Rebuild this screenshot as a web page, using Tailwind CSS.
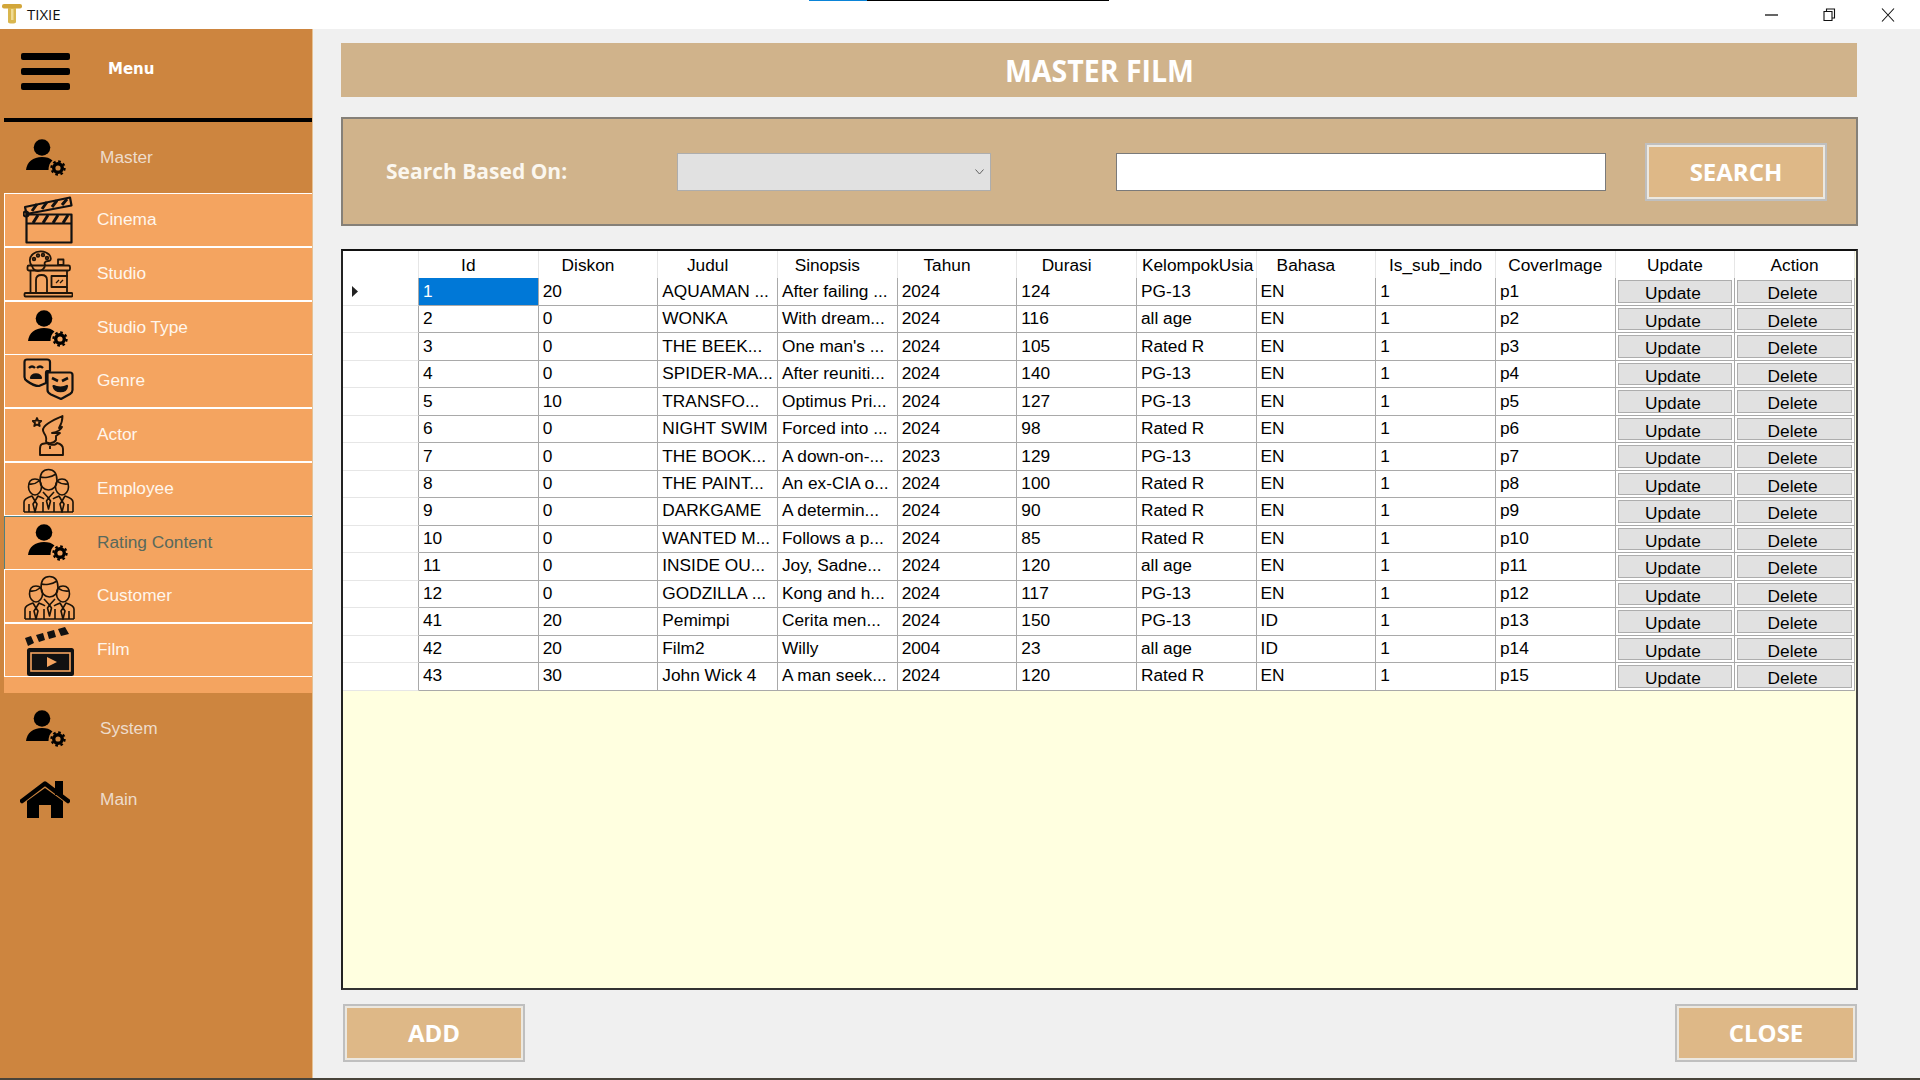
<!DOCTYPE html>
<html>
<head>
<meta charset="utf-8">
<title>TIXIE</title>
<script src="https://cdn.jsdelivr.net/npm/@tailwindcss/browser@4"></script>
</head>
<body class="m-0 w-[1920px] h-[1080px] overflow-hidden bg-[#f0f0f0] font-['Liberation_Sans',sans-serif]">
<svg class="absolute w-0 h-0">
  <defs>
    <symbol id="usergear" viewBox="0 0 40 37">
      <circle cx="16" cy="8.5" r="8.3" fill="#000"/>
      <path d="M0 31C1 23 7 18 16 18C20.5 18 24 19 26.5 21.5C24 23.5 22.5 26.5 22.5 31Z" fill="#000"/>
      <circle cx="32" cy="29" r="4.3" fill="none" stroke="#000" stroke-width="3.4"/>
      <circle cx="32" cy="29" r="6.6" fill="none" stroke="#000" stroke-width="2.2" stroke-dasharray="2.6 2.58"/>
    </symbol>
    <symbol id="people" viewBox="0 0 51 45">
      <g fill="none" stroke="#1a1208" stroke-width="1.6" stroke-linejoin="round">
        <path d="M17 13C17 6 20 1.500 25.500 1.500C31 1.500 34 6 34 13C34 18 30 22 25.500 22C21 22 17 18 17 13Z"/>
        <path d="M17.500 9C21 10 28 9.500 33 6"/>
        <path d="M5.500 19C5.500 13.500 8 11 12 11C16 11 18.500 14 18.500 19C18.500 23 15.500 27 12 27C8.500 27 5.500 23 5.500 19Z"/>
        <path d="M6 16C9 16.500 13 15.500 16 13"/>
        <path d="M32.500 19C32.500 14 35 11 39 11C43 11 45.500 13.500 45.500 19C45.500 23 42.500 27 39 27C35.500 27 32.500 23 32.500 19Z"/>
        <path d="M34 13C37 15.500 41 16.500 45 16"/>
        <path d="M1 44V34C1 31 6 29 9 28L12 33L15 28C17 29 20 30 21 31"/>
        <path d="M50 44V34C50 31 45 29 42 28L39 33L36 28C34 29 31 30 30 31"/>
        <path d="M20 24L25.500 30L31 24"/>
        <path d="M1 44H50"/>
        <path d="M12 33L10 36L12 44L14 36Z"/>
        <path d="M39 33L37 36L39 44L41 36Z"/>
        <path d="M25.500 30L23.500 33L25.500 41L27.500 33Z"/>
        <path d="M6 36V44M45 36V44M20 34V44M31 34V44"/>
      </g>
    </symbol>
  </defs>
</svg>

<div class="relative flex flex-col h-[1080px]">
  <div class="absolute top-0 left-[809px] w-[58px] h-px bg-[#0a84d8]"></div>
  <div class="absolute top-0 left-[867px] w-[242px] h-px bg-black"></div>

  <!-- title bar -->
  <header class="h-[29px] shrink-0 bg-white flex items-center">
    <svg class="ml-[2px] w-[20px] h-[20px] mb-px" viewBox="0 0 20 20">
      <rect x="0" y="0" width="20" height="4.500" rx="2" fill="#d2a63a"/>
      <path d="M6 4H14V18C14 20 6 20 6 18Z" fill="#d9b64e"/>
      <path d="M9 5H11.500V16H9Z" fill="#f0dc95"/>
    </svg>
    <span class="ml-[5px] text-[15px] text-[#111] font-['Open_Sans',sans-serif]">TIXIE</span>
    <div class="ml-auto flex items-center gap-[45px] mr-[25px]">
      <svg class="w-[13px] h-[13px]" viewBox="0 0 13 13"><path d="M0 7H13" stroke="#111" stroke-width="1.300"/></svg>
      <svg class="w-[13px] h-[13px]" viewBox="0 0 13 13"><path d="M1 3.500H9V12.500H1ZM3.500 3.500V1H11.500V10H9" fill="none" stroke="#111" stroke-width="1.100"/></svg>
      <svg class="w-[14px] h-[14px]" viewBox="0 0 14 14"><path d="M1 0.500L13 13.500M13 0.500L1 13.500" stroke="#111" stroke-width="1.100"/></svg>
    </div>
  </header>

  <div class="flex flex-1 min-h-0">
    <!-- sidebar -->
    <aside class="w-[313px] shrink-0 bg-[#cd853f] border-r border-[#e6c193] flex flex-col">
      <div class="h-[93px] ml-[4px] mr-0 border-b-4 border-black flex items-center relative shrink-0">
        <div class="ml-[17px] mb-[4px] w-[49px] flex flex-col gap-[8px]">
          <div class="h-[7px] rounded-[2px] bg-black"></div>
          <div class="h-[7px] rounded-[2px] bg-black"></div>
          <div class="h-[7px] rounded-[2px] bg-black"></div>
        </div>
        <span class="ml-[38px] mb-[9px] text-[15px] font-bold text-white font-['DejaVu_Sans',sans-serif]">Menu</span>
      </div>
      <div class="h-[71px] shrink-0 flex items-center text-[17.3px] text-[#eedccb]">
        <svg class="ml-[26px] w-[40px] h-[37px]"><use href="#usergear"/></svg>
        <span class="ml-[34px]">Master</span>
      </div>

      <div class="ml-[4px] h-[500px] shrink-0 bg-[#f4a460] text-[17.3px] text-[#fff6ec]">
        <div class="h-[54px] border border-r-0 border-white flex items-center relative">
          <svg class="absolute left-[18px] top-[2px] w-[50px] h-[48px]" viewBox="0 0 50 48" fill="none" stroke="#111" stroke-width="2.200" stroke-linejoin="round">
            <rect x="3.500" y="18.500" width="45" height="28"/>
            <path d="M3.500 27.500H48.500"/>
            <path d="M10 27L15 19M20 27L25 19M30 27L35 19M40 27L45 19" stroke-width="3"/>
            <path d="M2 11L47 1.500L48.500 9.500L3.500 18Z"/>
            <circle cx="3" cy="18" r="2.500"/>
            <path d="M9 15L14 8M19 13L24 6M29 11L34 4.500M39 9L44 3" stroke-width="3"/>
          </svg>
          <span class="ml-[92px]">Cinema</span>
        </div>
        <div class="h-[54px] border border-r-0 border-white flex items-center relative -mt-[0.25px]">
          <svg class="absolute left-[18px] top-[2px] w-[50px] h-[48px]" viewBox="0 0 50 48" fill="none" stroke="#201408" stroke-width="1.800" stroke-linejoin="round">
            <path d="M9 16C6 13 6 7 10 4C14 0.500 22 0.500 26 4.500C29 8 28 11 25 11C22 11 21 13 22 15C22 18 19 21 15 21C12 21 10 19 9 16Z"/>
            <circle cx="11" cy="9" r="1.300"/><circle cx="15" cy="5.500" r="1.300"/><circle cx="20" cy="5" r="1.300"/><circle cx="24" cy="8" r="1.300"/>
            <rect x="35" y="9.500" width="5.500" height="5.500"/>
            <rect x="4.500" y="15.500" width="42.500" height="5" rx="1.500"/>
            <path d="M7.500 20.500V43M44 20.500V27M44 37V43"/>
            <path d="M13 43V30C13 26 15 25 18.500 25C22 25 24 26 24 30V43"/>
            <rect x="28.500" y="26" width="15.500" height="11"/>
            <path d="M33 33L36 30M37 33L40 30" stroke-width="1.300"/>
            <rect x="1.500" y="43" width="48" height="3.500" rx="1"/>
          </svg>
          <span class="ml-[92px]">Studio</span>
        </div>
        <div class="h-[54px] border border-r-0 border-white flex items-center relative -mt-[0.25px]">
          <svg class="absolute left-[23px] top-[8px] w-[40px] h-[37px]"><use href="#usergear"/></svg>
          <span class="ml-[92px]">Studio Type</span>
        </div>
        <div class="h-[54px] border border-r-0 border-white flex items-center relative -mt-[0.25px]">
          <svg class="absolute left-[18px] top-[3px] w-[51px] h-[42px]" viewBox="0 0 51 42" fill="none" stroke="#111" stroke-width="2.200" stroke-linejoin="round">
            <path d="M1.500 4C1.500 2 2.500 1.500 4 1.500H24C26 1.500 27 2.500 27 4V13H24C23 13 23 14 23 15V25L16 28C13 28 8 26 4 23C2.500 22 1.500 21 1.500 19Z"/>
            <path d="M8 10C10 8 12 8 14 10M16 10C18 8 20 8 22 10" stroke-width="2.400" transform="translate(-2 0)"/>
            <path d="M8 20C9 15 17 15 18 20Z" fill="#111"/>
            <path d="M24.500 14.500H47C48.500 14.500 49.500 15.500 49.500 17V32C49.500 33.500 48.500 35 47 36L38 41L28 36.500C26 35.500 24.500 34 24.500 32Z"/>
            <path d="M29 20L35 23M45 20L39 23" stroke-width="2.600"/>
            <path d="M30.500 28C34 30 41 30 44 28C43 35 32 35 30.500 28Z" fill="#111"/>
          </svg>
          <span class="ml-[92px]">Genre</span>
        </div>
        <div class="h-[54px] border border-r-0 border-white flex items-center relative -mt-[0.25px]">
          <svg class="absolute left-[27px] top-[6px] w-[32px] h-[41px]" viewBox="0 0 32 41" fill="none" stroke="#201408" stroke-width="1.900" stroke-linejoin="round">
            <path d="M5 3L6.200 5.800L9.200 6L7 8L7.700 11L5 9.500L2.300 11L3 8L0.800 6L3.800 5.800Z"/>
            <path d="M30.500 1C27 3 20 5 14 10C11.500 12 10 15 12 18C14 21 15 23 14 26C14 29 22 29 24 25V21L28 18H20C25 17 29 15 30 12L27 13C29.500 9 30.500 5 30.500 1Z"/>
            <path d="M10 29C8 30 8 32 8 34V40H31V34C31 31 29 29 25 28C24 30 17 31 15 28Z"/>
            <path d="M18 31V34"/>
          </svg>
          <span class="ml-[92px]">Actor</span>
        </div>
        <div class="h-[54px] border border-r-0 border-white flex items-center relative -mt-[0.25px]">
          <svg class="absolute left-[18px] top-[5px] w-[51px] h-[45px]"><use href="#people"/></svg>
          <span class="ml-[92px]">Employee</span>
        </div>
        <div class="h-[54px] border border-r-0 border-[#4f7f80] flex items-center relative -mt-[0.25px] text-[#59695c]">
          <svg class="absolute left-[23px] top-[7px] w-[40px] h-[37px]"><use href="#usergear"/></svg>
          <span class="ml-[92px]">Rating Content</span>
        </div>
        <div class="h-[54px] border border-r-0 border-white flex items-center relative -mt-[0.25px]">
          <svg class="absolute left-[19px] top-[5px] w-[51px] h-[45px]"><use href="#people"/></svg>
          <span class="ml-[92px]">Customer</span>
        </div>
        <div class="h-[54px] border border-r-0 border-white flex items-center relative -mt-[0.25px]">
          <svg class="absolute left-[19px] top-[3px] w-[51px] h-[49px]" viewBox="0 0 51 49">
            <path d="M1 11L7 9L10 16L4 19ZM12 8L19 6L21 13L15 15ZM23 5L30 3L32 10L25 12ZM34 2L41 0L45 7L37 9Z" fill="#111"/>
            <rect x="3" y="21" width="47" height="28" rx="2.500" fill="#111"/>
            <rect x="7" y="26" width="39" height="18" fill="#111" stroke="#f4a460" stroke-width="1.600"/>
            <path d="M23 30V40L33 35Z" fill="#f4a460"/>
          </svg>
          <span class="ml-[92px]">Film</span>
        </div>
      </div>

      <div class="h-[71px] shrink-0 flex items-center text-[17.3px] text-[#eedccb]">
        <svg class="ml-[26px] w-[40px] h-[37px]"><use href="#usergear"/></svg>
        <span class="ml-[34px]">System</span>
      </div>
      <div class="h-[71px] shrink-0 flex items-center text-[17.3px] text-[#eedccb]">
        <svg class="ml-[20px] w-[50px] h-[38px]" viewBox="0 0 50 38">
          <path d="M35 0H43V14H35Z" fill="#000"/>
          <path d="M2 20L25 2.500L48 20" fill="none" stroke="#000" stroke-width="4.500" stroke-linecap="round" stroke-linejoin="round"/>
          <path d="M7 20L25 7L43 20V37H31V24H19V37H7Z" fill="#000"/>
        </svg>
        <span class="ml-[30px]">Main</span>
      </div>
    </aside>

    <!-- content -->
    <main class="w-[1602px] shrink-0 pl-[28px] pt-[14px] flex flex-col">
      <div class="w-[1516px] h-[54px] bg-[#d0b38b] flex items-center justify-center">
        <h1 class="text-[30px] font-bold text-white font-['Open_Sans',sans-serif] scale-x-[0.95]">MASTER FILM</h1>
      </div>

      <div class="mt-[20px] w-[1517px] h-[109px] bg-[#d0b38b] border-2 border-t-2 border-[#858078] flex items-center relative">
        <span class="ml-[43px] w-[291px] text-[21px] font-bold text-[#fbf7ef] font-['Open_Sans',sans-serif]">Search Based On:</span>
        <div class="w-[314px] h-[38px] bg-[#e1e1e1] border border-[#adadad] flex items-center justify-end pr-[6px]">
          <svg class="w-[9px] h-[6px]" viewBox="0 0 9 6"><path d="M0.500 0.500L4.500 5L8.500 0.500" fill="none" stroke="#606060"/></svg>
        </div>
        <div class="ml-[125px] w-[490px] h-[38px] bg-white border border-[#7a7a7a]"></div>
        <button class="ml-[39px] w-[182px] h-[58px] bg-[#deb887] border-2 border-[#bfbfbf] shadow-[inset_0_0_0_2px_#ece8e0] text-[24px] font-bold text-white font-['Open_Sans',sans-serif]">SEARCH</button>
      </div>

      <div class="mt-[23px] w-[1517px] h-[741px] bg-[#ffffe0] border-2 border-r-[#444] border-b-[#333] border-t-[#111] border-l-[#222] text-[17.3px] text-black">
        <div class="grid grid-cols-[76px_repeat(12,119.67px)] auto-rows-[27.47px] [&>div]:bg-white [&>div]:border-r [&>div]:border-b [&>div]:border-[#a9a9a9] [&>div]:pl-[4px] [&>div]:flex [&>div]:items-center [&>div]:overflow-hidden [&>div]:whitespace-nowrap [&_button]:w-full [&_button]:h-full [&_button]:bg-[#e1e1e1] [&_button]:border [&_button]:border-[#adadad] [&_button]:pr-[4px]">
          <div class="h-[30px] border-r-[#e6e6e6]! border-b-[#a9a9a9]!"></div>
          <div class="h-[30px] border-r-[#e6e6e6]! justify-center pr-[24px]!">Id</div>
          <div class="h-[30px] border-r-[#e6e6e6]! justify-center pr-[24px]!">Diskon</div>
          <div class="h-[30px] border-r-[#e6e6e6]! justify-center pr-[24px]!">Judul</div>
          <div class="h-[30px] border-r-[#e6e6e6]! justify-center pr-[24px]!">Sinopsis</div>
          <div class="h-[30px] border-r-[#e6e6e6]! justify-center pr-[24px]!">Tahun</div>
          <div class="h-[30px] border-r-[#e6e6e6]! justify-center pr-[24px]!">Durasi</div>
          <div class="h-[30px] border-r-[#e6e6e6]! pl-[5px]!">KelompokUsia</div>
          <div class="h-[30px] border-r-[#e6e6e6]! justify-center pr-[24px]!">Bahasa</div>
          <div class="h-[30px] border-r-[#e6e6e6]! justify-center pl-0!">Is_sub_indo</div>
          <div class="h-[30px] border-r-[#e6e6e6]! justify-center pl-0!">CoverImage</div>
          <div class="h-[30px] border-r-[#e6e6e6]! justify-center pl-0!">Update</div>
          <div class="h-[30px] border-r-[#e6e6e6]! justify-center pl-0!">Action</div>
        </div>
        <div class="grid grid-cols-[76px_repeat(12,119.67px)] auto-rows-[27.47px] [&>div]:bg-white [&>div]:border-r [&>div]:border-b [&>div]:border-[#a9a9a9] [&>div]:pl-[4px] [&>div]:flex [&>div]:items-center [&>div]:overflow-hidden [&>div]:whitespace-nowrap [&_button]:w-full [&_button]:h-full [&_button]:bg-[#e1e1e1] [&_button]:border [&_button]:border-[#adadad] [&_button]:pr-[4px]">
          <div class="border-b-[#e6e6e6]! pl-[9px]!"><svg class="w-[6px] h-[11px]" viewBox="0 0 6 11"><path d="M0 0L6 5.500L0 11Z" fill="#222"/></svg></div>
          <div class="bg-[#0078d7]! text-white">1</div><div>20</div><div>AQUAMAN ...</div><div>After failing ...</div><div>2024</div><div>124</div><div>PG-13</div><div>EN</div><div>1</div><div>p1</div><div class="p-[2px]!"><button>Update</button></div><div class="p-[2px]!"><button>Delete</button></div>
          <div class="border-b-[#e6e6e6]!"></div>
          <div>2</div><div>0</div><div>WONKA</div><div>With dream...</div><div>2024</div><div>116</div><div>all age</div><div>EN</div><div>1</div><div>p2</div><div class="p-[2px]!"><button>Update</button></div><div class="p-[2px]!"><button>Delete</button></div>
          <div class="border-b-[#e6e6e6]!"></div>
          <div>3</div><div>0</div><div>THE BEEK...</div><div>One man's ...</div><div>2024</div><div>105</div><div>Rated R</div><div>EN</div><div>1</div><div>p3</div><div class="p-[2px]!"><button>Update</button></div><div class="p-[2px]!"><button>Delete</button></div>
          <div class="border-b-[#e6e6e6]!"></div>
          <div>4</div><div>0</div><div>SPIDER-MA...</div><div>After reuniti...</div><div>2024</div><div>140</div><div>PG-13</div><div>EN</div><div>1</div><div>p4</div><div class="p-[2px]!"><button>Update</button></div><div class="p-[2px]!"><button>Delete</button></div>
          <div class="border-b-[#e6e6e6]!"></div>
          <div>5</div><div>10</div><div>TRANSFO...</div><div>Optimus Pri...</div><div>2024</div><div>127</div><div>PG-13</div><div>EN</div><div>1</div><div>p5</div><div class="p-[2px]!"><button>Update</button></div><div class="p-[2px]!"><button>Delete</button></div>
          <div class="border-b-[#e6e6e6]!"></div>
          <div>6</div><div>0</div><div>NIGHT SWIM</div><div>Forced into ...</div><div>2024</div><div>98</div><div>Rated R</div><div>EN</div><div>1</div><div>p6</div><div class="p-[2px]!"><button>Update</button></div><div class="p-[2px]!"><button>Delete</button></div>
          <div class="border-b-[#e6e6e6]!"></div>
          <div>7</div><div>0</div><div>THE BOOK...</div><div>A down-on-...</div><div>2023</div><div>129</div><div>PG-13</div><div>EN</div><div>1</div><div>p7</div><div class="p-[2px]!"><button>Update</button></div><div class="p-[2px]!"><button>Delete</button></div>
          <div class="border-b-[#e6e6e6]!"></div>
          <div>8</div><div>0</div><div>THE PAINT...</div><div>An ex-CIA o...</div><div>2024</div><div>100</div><div>Rated R</div><div>EN</div><div>1</div><div>p8</div><div class="p-[2px]!"><button>Update</button></div><div class="p-[2px]!"><button>Delete</button></div>
          <div class="border-b-[#e6e6e6]!"></div>
          <div>9</div><div>0</div><div>DARKGAME</div><div>A determin...</div><div>2024</div><div>90</div><div>Rated R</div><div>EN</div><div>1</div><div>p9</div><div class="p-[2px]!"><button>Update</button></div><div class="p-[2px]!"><button>Delete</button></div>
          <div class="border-b-[#e6e6e6]!"></div>
          <div>10</div><div>0</div><div>WANTED M...</div><div>Follows a p...</div><div>2024</div><div>85</div><div>Rated R</div><div>EN</div><div>1</div><div>p10</div><div class="p-[2px]!"><button>Update</button></div><div class="p-[2px]!"><button>Delete</button></div>
          <div class="border-b-[#e6e6e6]!"></div>
          <div>11</div><div>0</div><div>INSIDE OU...</div><div>Joy, Sadne...</div><div>2024</div><div>120</div><div>all age</div><div>EN</div><div>1</div><div>p11</div><div class="p-[2px]!"><button>Update</button></div><div class="p-[2px]!"><button>Delete</button></div>
          <div class="border-b-[#e6e6e6]!"></div>
          <div>12</div><div>0</div><div>GODZILLA ...</div><div>Kong and h...</div><div>2024</div><div>117</div><div>PG-13</div><div>EN</div><div>1</div><div>p12</div><div class="p-[2px]!"><button>Update</button></div><div class="p-[2px]!"><button>Delete</button></div>
          <div class="border-b-[#e6e6e6]!"></div>
          <div>41</div><div>20</div><div>Pemimpi</div><div>Cerita men...</div><div>2024</div><div>150</div><div>PG-13</div><div>ID</div><div>1</div><div>p13</div><div class="p-[2px]!"><button>Update</button></div><div class="p-[2px]!"><button>Delete</button></div>
          <div class="border-b-[#e6e6e6]!"></div>
          <div>42</div><div>20</div><div>Film2</div><div>Willy</div><div>2004</div><div>23</div><div>all age</div><div>ID</div><div>1</div><div>p14</div><div class="p-[2px]!"><button>Update</button></div><div class="p-[2px]!"><button>Delete</button></div>
          <div class="border-b-[#e6e6e6]!"></div>
          <div>43</div><div>30</div><div>John Wick 4</div><div>A man seek...</div><div>2024</div><div>120</div><div>Rated R</div><div>EN</div><div>1</div><div>p15</div><div class="p-[2px]!"><button>Update</button></div><div class="p-[2px]!"><button>Delete</button></div>
        </div>
      </div>

      <div class="mt-[14px] w-[1516px] flex justify-between pl-[2px]">
        <button class="w-[182px] h-[58px] bg-[#deb887] border-2 border-[#bfbfbf] shadow-[inset_0_0_0_2px_#ece8e0] text-[24px] font-bold text-white font-['Open_Sans',sans-serif]">ADD</button>
        <button class="w-[182px] h-[58px] bg-[#deb887] border-2 border-[#bfbfbf] shadow-[inset_0_0_0_2px_#ece8e0] text-[24px] font-bold text-white font-['Open_Sans',sans-serif]">CLOSE</button>
      </div>
    </main>
  </div>
  <div class="h-[2px] shrink-0 bg-[#48433a]"></div>
</div>
</body>
</html>
